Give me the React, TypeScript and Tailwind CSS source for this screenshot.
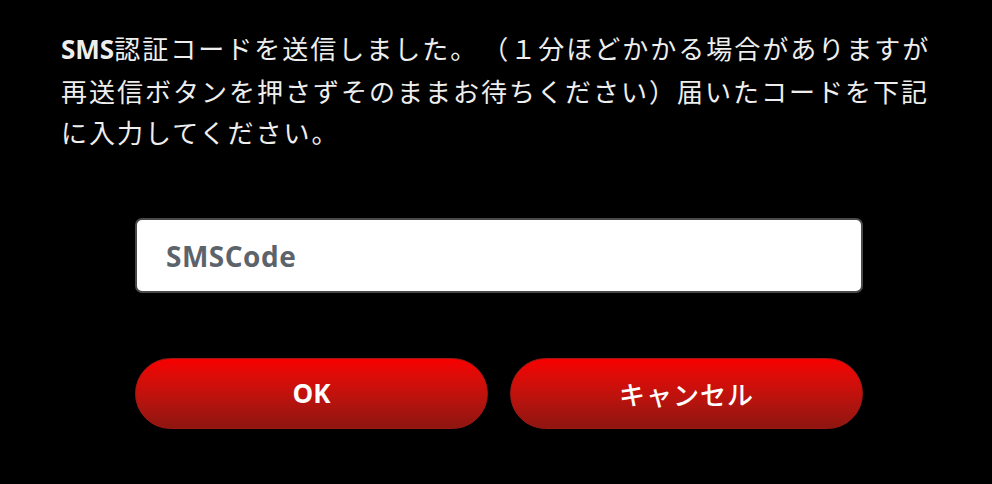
import React from "react";

export default function App() {
  const jp = { fontFamily: '"Noto Sans CJK JP", "Noto Sans", sans-serif' };
  const lat = { fontFamily: '"Open Sans", "Noto Sans", sans-serif' };
  return (
    <div className="w-[992px] h-[484px] bg-black overflow-hidden" style={jp}>
      <p className="pl-[61px] pt-[27px] text-[26px] leading-[41px] tracking-[2px] text-[#eeeeee] whitespace-nowrap">
        <span className="font-bold tracking-[0px]" style={lat}>SMS</span>
        認証コードを送信しました。<span className="ml-[17px]">（</span>１分ほどかかる場合がありますが
        <br />
        再送信ボタンを押さずそのままお待ちください）届いたコードを下記
        <br />
        に入力してください。
      </p>
      <div className="ml-[135px] w-[728px] mt-[66px] flex flex-col">
        <div className="h-[75px] rounded-[7px] border-2 border-[#4a4a4a] bg-white flex items-center pl-[29px]">
          <span className="text-[28px] font-bold text-[#5c636a] tracking-[0.5px]" style={lat}>
            SMSCode
          </span>
        </div>
        <div className="mt-[65px] flex gap-[22px]">
          <button
            className="flex-1 h-[71px] rounded-full border border-[#9c1a16] bg-gradient-to-b from-[#f70000] to-[#8f1510] text-white text-[26px] font-bold flex items-center justify-center"
            style={lat}
          >
            OK
          </button>
          <button className="flex-1 h-[71px] rounded-full border border-[#9c1a16] bg-gradient-to-b from-[#f70000] to-[#8f1510] text-white text-[26px] font-medium tracking-[1px] flex items-center justify-center">
            キャンセル
          </button>
        </div>
      </div>
    </div>
  );
}
